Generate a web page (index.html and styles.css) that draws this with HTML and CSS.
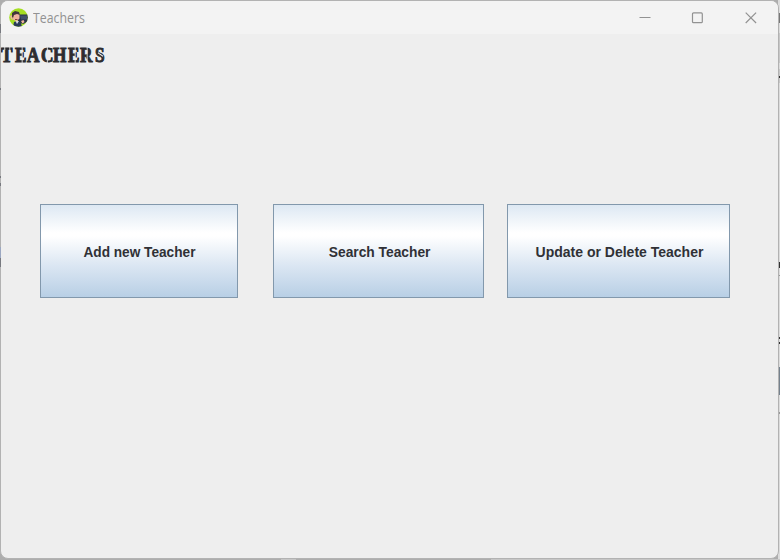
FILE: index.html
```html
<!DOCTYPE html>
<html lang="en">
<head>
<meta charset="utf-8">
<title>Teachers</title>
<link rel="stylesheet" href="styles.css">
</head>
<body>
<div class="desktop">
  <main class="window">
    <header class="titlebar">
      <svg class="app-icon" viewBox="0 0 19 19">
        <defs><clipPath id="disc"><circle cx="9.5" cy="9.5" r="9.3"/></clipPath></defs>
        <g clip-path="url(#disc)">
          <rect width="19" height="19" fill="#a5df22"/>
          <path d="M9 6.500h10v7l-5 2.500-5-2z" fill="#293349"/>
          <path d="M11 7.500h7v4h-6z" fill="#42526c"/>
          <path d="M4 19l1-5 3-1 4 2 1 4z" fill="#293b58"/>
          <path d="M6.500 13l1.500 3 2-3z" fill="#d9dde6"/>
          <path d="M4 6h6.500v4.500l-3 3-3.500-2z" fill="#efb59e"/>
          <path d="M3 9l0-4 3-2 4 1 1 3-3-1-3 1-1 3z" fill="#41363c"/>
          <path d="M2 11l-1-3 1.500-1 1.500 5zM12 13l2.500-1 1 2-2 1.500z" fill="#efb59e"/>
          <path d="M6 11.500h2.500" stroke="#8e3c43"/>
        </g>
      </svg>
      <span class="caption">Teachers</span>
      <svg class="controls" viewBox="0 0 118 12">
        <path d="M.5 5.500h11" />
        <rect x="53.500" y=".9" width="9.800" height="9.800" rx="1"/>
        <path d="M106.700 .6l10.400 10.400M117.100 .6l-10.400 10.400"/>
      </svg>
    </header>
    <h1 class="heading"><span class="t">T</span><span class="e">E</span><span class="a">A</span><span class="c">C</span><span class="h">H</span><span class="e">E</span><span class="r">R</span><span class="s">S</span></h1>
    <section class="actions">
      <button class="action add"><span>Add new Teacher</span></button>
      <button class="action search"><span>Search Teacher</span></button>
      <button class="action update"><span>Update or Delete Teacher</span></button>
    </section>
  </main>
  <svg class="backdrop" viewBox="0 0 780 560">
    <path d="M0 24h1v9h-1zM0 88h1v2h-1zM0 176h1v2h-1zM0 183h1v3h-1zM0 258h1v9h-1z" fill="#77797f"/>
    <path d="M0 247h1v11h-1z" fill="#9ba7c1"/>
    <path d="M779 13h1v10h-1z" fill="#777"/>
    <path d="M779 33h1v30h-1zM779 69h1v14h-1z" fill="#c7c7c7"/>
    <path d="M779 76h1v2h-1zM779 262h1v6h-1zM779 337h1v2h-1zM779 342h1v2h-1z" fill="#333"/>
    <path d="M779 367h1v28h-1z" fill="#75818d"/>
    <path d="M779 275h1v1h-1zM779 412h1v2h-1z" fill="#999"/>
    <path d="M281 559h15v1h-15zM491 559h289v1h-289z" fill="#c6c6c6"/>
  </svg>
</div>
</body>
</html>
```
FILE: styles.css
```css
* { box-sizing: border-box; }
body { margin: 0; }
.desktop {
  position: relative;
  width: 780px;
  height: 560px;
  overflow: hidden;
  padding: 0 1px 1px 0;
  background: linear-gradient(90deg, #adadad 778px, #dcdcdc 778px);
}
.backdrop { position: absolute; inset: 0; width: 780px; height: 560px; pointer-events: none; }
.window {
  height: 559px;
  display: flex;
  flex-direction: column;
  overflow: hidden;
  border: 1px solid #b2b2b2;
  border-radius: 8px;
  background: #eee;
}
.titlebar {
  display: flex;
  align-items: center;
  flex: none;
  height: 33px;
  padding: 0 21px 0 8px;
  background: #f3f3f3;
}
.app-icon { width: 19px; height: 19px; }
.caption {
  margin-left: 4.500px;
  font: 14px/18px "Open Sans", sans-serif;
  color: #929292;
  transform: scaleX(.88);
  transform-origin: left;
}
.controls {
  width: 118px;
  height: 12px;
  margin-left: auto;
  fill: none;
  stroke: #929292;
  stroke-width: 1.200;
}

/* Stencil lettering: condensed bold serif with a slit beside each stem */
.heading {
  display: flex;
  flex: none;
  height: 42px;
  margin: 0;
  font: 900 20.500px/42px "Liberation Serif", serif;
  color: #2d2d30;
  -webkit-text-stroke: 1px #2d2d30;
}
.heading span { position: relative; flex: none; transform: scaleX(.84); transform-origin: left; }
.heading .t { width: 13.500px; }
.heading .e { width: 12px; }
.heading .a { width: 14px; }
.heading .c { width: 12.500px; }
.heading .h { width: 15px; }
.heading .r { width: 14.500px; }
.heading .s { width: 11px; }
.heading span::after {
  content: "";
  position: absolute;
  left: 8px;
  top: 12px;
  width: .8px;
  height: 18px;
  background: #eee;
}
.heading .t::after { left: 4px; height: 4px; box-shadow: 6px 0 #eee; }
.heading .c::after { left: 7px; }
.heading .a::after,
.heading .h::after { display: none; }
.heading .s::after { left: 3px; top: 20px; width: 7px; height: 1px; transform: rotate(30deg); }

.actions {
  display: flex;
  height: 94px;
  margin: 128px 0 0 39px;
}
.action {
  flex: none;
  padding: 2px 0 0 1px;
  border: 1px solid #8298ac;
  border-radius: 0;
  background: linear-gradient(#dde8f3 0%, #fff 30%, #fff 34%, #dce7f3 65%, #b8cfe5 100%);
  font: bold 14px/18px "Liberation Sans", Arial, sans-serif;
  color: #303136;
}
.action span { display: inline-block; }
.add { width: 198px; }
.add span { transform: scaleX(.975); }
.search { width: 211px; margin-left: 35px; padding-left: 2px; }
.search span { transform: scaleX(.985); }
.update { width: 223px; margin-left: 23px; padding-left: 2px; }
```
